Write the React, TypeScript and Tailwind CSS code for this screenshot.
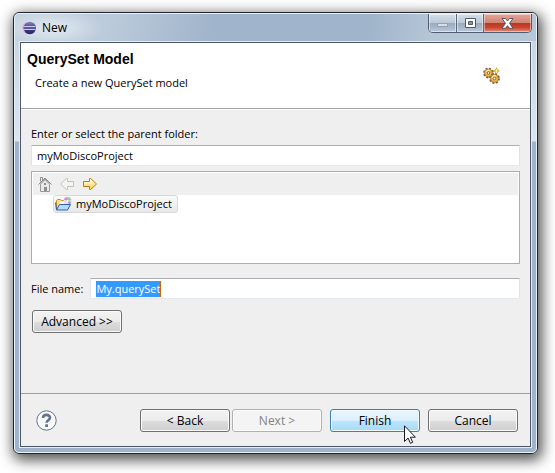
import { useEffect, useRef, type ReactNode } from "react";

function EclipseIcon() {
  return (
    <svg width="14" height="14" viewBox="0 0 14 14" aria-hidden="true">
      <defs>
        <linearGradient id="orb" x1="0" y1="0" x2="0" y2="1">
          <stop offset="0" stopColor="#8a87bd" />
          <stop offset="0.45" stopColor="#4a4590" />
          <stop offset="1" stopColor="#2a2267" />
        </linearGradient>
      </defs>
      <circle cx="6" cy="7" r="6" fill="#e3b5cf" />
      <circle cx="7.8" cy="7" r="6.2" fill="url(#orb)" />
      <path d="M1.4 5.5h12.2M1.4 8.5h12.2" stroke="#c9cce8" />
      <path d="M1.4 7h12.4" stroke="#6f6cac" />
    </svg>
  );
}

function Gear({ cx, cy }: { cx: number; cy: number }) {
  return (
    <g>
      <circle cx={cx} cy={cy} r="4.4" fill="none" stroke="#85563a" strokeWidth="2" strokeDasharray="2 1.456" />
      <circle cx={cx} cy={cy} r="3.9" fill="#f0b840" stroke="#9c6a33" strokeWidth="0.7" />
      <path d={`M${cx - 2.6} ${cy - 0.6}a3 3 0 0 1 4 -2`} stroke="#fff09a" strokeWidth="1.3" fill="none" />
      <circle cx={cx} cy={cy} r="1.3" fill="#fff" stroke="#7d5a42" strokeWidth="0.9" />
    </g>
  );
}

function GearsIcon() {
  return (
    <svg width="17" height="17" viewBox="0 0 17 17" className="mr-[30px] mt-6" aria-hidden="true">
      <Gear cx={5.5} cy={6} />
      <Gear cx={11.5} cy={11.5} />
      <path d="M13.5.2 14.8 2.7 17 4 14.800 5.3 13.500 7.800 12.200 5.3 9.700 4 12.200 2.700z" fill="#c39a1b" />
      <path d="M13.500 2v4M11.500 4h4" stroke="#fff3a0" />
    </svg>
  );
}

function HomeIcon() {
  return (
    <svg width="15" height="16" viewBox="0 0 15 16" fill="none" aria-hidden="true">
      <path d="M3.500 8v7.500h9V8L8 3z" fill="#e9e9e9" stroke="#999" />
      <path d="M1.500 8.500 8 2l6.500 6.500M3.500 5.500v-4h2V4" stroke="#8e8e8e" />
      <path d="M3.500 8.500 8 4l4.500 4.500" stroke="#b5b5b5" />
      <path d="M7 7h2v2H7zM7 11h3v4H7z" fill="#8e8e8e" />
    </svg>
  );
}

function ArrowIcon({ forward }: { forward?: boolean }) {
  return (
    <svg width="16" height="14" viewBox="0 0 16 14" aria-hidden="true">
      <defs>
        <linearGradient id="gold" x1="0" y1="0" x2="0" y2="1">
          <stop offset="0.2" stopColor="#fffbe6" />
          <stop offset="0.8" stopColor="#ffd45a" />
        </linearGradient>
      </defs>
      {forward ? (
        <path d="M1.5 4.5h6v-3h1.2L14.5 7l-5.8 5.5H7.500v-3h-6z" fill="url(#gold)" stroke="#b87d10" strokeLinejoin="round" />
      ) : (
        <path d="M14.500 4.500h-6v-3H7.300L1.500 7l5.800 5.500h1.200v-3h6z" fill="#f3f3ef" stroke="#c4c3b8" strokeLinejoin="round" />
      )}
    </svg>
  );
}

function ProjectIcon() {
  return (
    <svg width="17" height="14" viewBox="0 0 17 14" aria-hidden="true">
      <path d="M1.500 12V3.500l1-1h3l1 1H13V12z" fill="#fbdf80" stroke="#c08d28" />
      <path d="M5 4.500h5v3H5z" fill="#fff" />
      <circle cx="12.500" cy="4" r="4" fill="#dfe4ee" />
      <path d="M12.500 4V0A4 4 0 0 1 16.300 3z" fill="#8ed49a" />
      <path d="M12.500 4 8.800 2.500A4 4 0 0 1 12.500 0z" fill="#e884c0" />
      <path d="m12.500 4 3.900 1-2 2.800z" fill="#b78ad9" />
      <circle cx="12.500" cy="4" r="1" fill="#fff" />
      <path d="M4.500 7.500h11l-3 5.500h-11z" fill="#b5dafa" stroke="#2c5fb5" strokeLinejoin="round" />
      <path d="M.5 5.500 1.500 13" stroke="#2c5fb5" />
    </svg>
  );
}

function CursorIcon() {
  return (
    <svg width="12" height="19" viewBox="0 0 12 19" className="pointer-events-none absolute left-[74px] top-4" aria-hidden="true">
      <path d="M.5.8v15.700l3.600-3.400 2.300 5.200 2.300-1-2.300-5.100h5z" fill="#fff" stroke="#15182e" />
    </svg>
  );
}

const tones = {
  normal:
    "border-[#707070] text-black bg-[linear-gradient(#f3f3f3,#ebebeb_50%,#dddddd_50%,#cfcfcf)] shadow-[inset_0_0_0_1px_#fbfbfb]",
  disabled: "border-[#adb2b5] text-[#838383] bg-[#f4f4f4] shadow-[inset_0_0_0_1px_#fcfcfc]",
  hot: "border-[#3c7fb1] text-black bg-[linear-gradient(#eaf6fd,#d9f0fc_50%,#bee6fd_50%,#a7d9f5)] shadow-[inset_0_0_0_1px_#f0faff]",
};

function PushButton({ tone = "normal", children }: { tone?: keyof typeof tones; children: ReactNode }) {
  return (
    <button
      type="button"
      disabled={tone === "disabled"}
      className={`h-[23px] w-[90px] shrink-0 whitespace-nowrap rounded-[3px] border text-[12px] leading-4 ${tones[tone]}`}
    >
      {children}
    </button>
  );
}

function CaptionButtons() {
  const cold =
    "flex h-[18px] items-center justify-center border-r border-[#596779] bg-[linear-gradient(#d5dee8,#bac8d7_50%,#98a9bc_50%,#b9c9da)] shadow-[inset_0_0_0_1px_#ffffff80]";
  return (
    <div className="flex self-start overflow-hidden rounded-b-[5px] border border-t-0 border-[#4f5c6d]">
      <button type="button" aria-label="Minimize" className={`${cold} w-7`}>
        <svg width="13" height="5" viewBox="0 0 13 5" className="mt-1">
          <path d="M1.500.5h10v3h-10z" fill="#d7dde4" stroke="#929fae" />
        </svg>
      </button>
      <button type="button" aria-label="Maximize" className={`${cold} w-[27px]`}>
        <svg width="13" height="11" viewBox="0 0 13 11">
          <path d="M1.500.5h10v9h-10z" fill="#fff" stroke="#515868" />
          <path d="M4.500 3.500h4v3h-4z" fill="#8797aa" stroke="#515868" />
        </svg>
      </button>
      <button
        type="button"
        aria-label="Close"
        className="flex h-[18px] w-[47px] items-center justify-center bg-[linear-gradient(#e2a799,#d18473_48%,#b73420_48%,#c94631_75%,#e58e75)] shadow-[inset_0_0_0_1px_#ffffff70]"
      >
        <svg width="13" height="11" viewBox="0 0 13 11">
          <path d="M1 .5h3.500l2 2.500 2-2.500H12L8.500 5.300 12 10.300H8.500l-2-2.600-2 2.600H1L4.500 5.300z" fill="#fff" stroke="#535666" />
        </svg>
      </button>
    </div>
  );
}

const field = "rounded-[1px] border border-[#e3e9ef] border-t-[#abadb3] border-x-[#e2e3ea] bg-white";

export default function App() {
  const fileName = useRef<HTMLInputElement>(null);
  useEffect(() => {
    fileName.current?.focus();
    fileName.current?.select();
  }, []);

  return (
    <main className="bg-white pb-5 pl-[13px] pr-[17px] pt-3 font-['Open_Sans','Noto_Sans',sans-serif] text-[11px] leading-4 text-black">
      <section className="rounded-[6px] border border-[#20252c] bg-[linear-gradient(#c3d2e0,#dbe5ee_128px,#9fb4cc_129px)] shadow-[2px_4px_14px_2px_#000000b0]">
        <div className="rounded-[5px] border border-[#eaf1f8] px-1 pb-1">
          <header className="-mx-1 flex h-[27px] items-start rounded-t-[4px] bg-[radial-gradient(ellipse_50px_18px_at_38px_14px,#ffffff90,#ffffff00),linear-gradient(100deg,#c3d2e0,#bccbdb_18%,#a0b4cb_38%,#a0b4cb_68%,#b6c6d7_80%)] pl-[7px]">
            <div className="flex h-[27px] flex-1 items-center gap-[6px]">
              <EclipseIcon />
              <h1 className="text-[12px]">New</h1>
            </div>
            <div className="pr-1">
              <CaptionButtons />
            </div>
          </header>
          <div className="border border-[#e4edf5]">
            <div className="border border-[#4b5666] bg-[#efefef]">
              <div className="flex h-[66px] justify-between border-b border-[#a0a0a0] bg-white">
                <div className="pl-[6px] pt-2">
                  <h2 className="font-['Liberation_Sans',sans-serif] text-[14px] font-bold leading-4">QuerySet Model</h2>
                  <p className="pl-2 pt-2">Create a new QuerySet model</p>
                </div>
                <GearsIcon />
              </div>
              <div className="flex flex-col border-t border-white px-[10px] pb-[60px] pt-4">
                <label htmlFor="parent">Enter or select the parent folder:</label>
                <input id="parent" defaultValue="myMoDiscoProject" className={`${field} mt-[3px] h-[21px] px-[5px]`} />
                <div className="mt-[5px] h-[93px] border border-[#abadb3] bg-white p-px">
                  <div className="flex h-[22px] items-center gap-[7px] bg-[#efefef] pl-1">
                    <button type="button" aria-label="Home"><HomeIcon /></button>
                    <button type="button" aria-label="Back to previous folder"><ArrowIcon /></button>
                    <button type="button" aria-label="Go into folder"><ArrowIcon forward /></button>
                  </div>
                  <ul className="pl-5">
                    <li className="flex h-[18px] w-fit items-center gap-1 rounded-[3px] border border-[#d9d9d9] bg-[linear-gradient(#fafafa,#e8e8e8)] pl-px pr-[5px]">
                      <ProjectIcon />
                      myMoDiscoProject
                    </li>
                  </ul>
                </div>
                <div className="mt-[14px] flex items-center gap-[7px]">
                  <label htmlFor="file">File name:</label>
                  <div className={`${field} flex h-[21px] flex-1 items-center px-[5px]`}>
                    <input
                      id="file"
                      ref={fileName}
                      defaultValue="My.querySet"
                      className="h-4 border-r border-[#cc6a00] p-0 leading-4 outline-none [field-sizing:content] selection:bg-[#3399fffd] selection:text-white"
                    />
                  </div>
                </div>
                <div className="mt-[11px] pl-px">
                  <PushButton>Advanced &gt;&gt;</PushButton>
                </div>
              </div>
              <footer className="flex items-center border-t border-[#a0a0a0] pb-[14px] pl-[15px] pr-3 pt-[15px]">
                <button type="button" aria-label="Help">
                  <svg width="21" height="21" viewBox="0 0 21 21" fill="none">
                    <circle cx="10.500" cy="10.500" r="9.700" fill="#fafafa" stroke="#62728c" />
                    <path d="M7 8C7 3.800 14 3.900 14 7.800c0 2.400-3.400 2.500-3.400 5" stroke="#62728c" strokeWidth="2.600" />
                    <path d="M9.200 14.300H12V17H9.200z" fill="#62728c" />
                  </svg>
                </button>
                <div className="ml-auto flex gap-2">
                  <div className="flex gap-[2px]">
                    <PushButton>&lt; Back</PushButton>
                    <PushButton tone="disabled">Next &gt;</PushButton>
                  </div>
                  <div className="relative">
                    <PushButton tone="hot">Finish</PushButton>
                    <CursorIcon />
                  </div>
                  <PushButton>Cancel</PushButton>
                </div>
              </footer>
            </div>
          </div>
        </div>
      </section>
    </main>
  );
}
